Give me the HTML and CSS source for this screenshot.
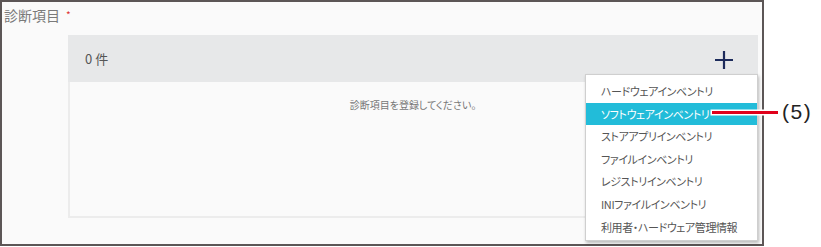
FILE: index.html
```html
<!DOCTYPE html>
<html lang="ja">
<head>
<meta charset="utf-8">
<link rel="stylesheet" href="styles.css">
</head>
<body>
<div class="frame">
  <div class="label">診断項目<span class="req">*</span></div>
  <div class="panel">
    <div class="panel-head">
      <span class="count">0 件</span>
      <svg class="plus" width="20" height="20" viewBox="0 0 20 20"><path d="M10 1V19M1 10H19" stroke="#1d2b5b" stroke-width="2.2" fill="none"/></svg>
    </div>
    <div class="panel-body">診断項目を登録してください。</div>
  </div>
  <ul class="menu">
    <li>ハードウェアインベントリ</li>
    <li class="active">ソフトウェアインベントリ</li>
    <li>ストアアプリインベントリ</li>
    <li>ファイルインベントリ</li>
    <li>レジストリインベントリ</li>
    <li>INIファイルインベントリ</li>
    <li>利用者・ハードウェア管理情報</li>
  </ul>
</div>
<div class="callout"><span class="line"></span><span class="num">(5)</span></div>
</body>
</html>
```

FILE: styles.css
```css
html, body { margin: 0; padding: 0; background: #ffffff; }
body {
  position: relative;
  width: 821px;
  height: 247px;
  overflow: hidden;
  font-family: "Noto Sans CJK JP", "Noto Sans", sans-serif;
}
.frame {
  position: relative;
  box-sizing: border-box;
  width: 764px;
  height: 246px;
  border: 2px solid #5c5656;
  background: #fafafa;
  padding: 3px 0 0 2px;
}
.label {
  font-size: 14px;
  line-height: 20px;
  color: #7a7a7a;
}
.req {
  color: #d33;
  font-size: 10px;
  vertical-align: top;
  margin-left: 6px;
}
.panel {
  margin: 10px 0 0 64px;
  width: 690px;
}
.panel-head {
  height: 47px;
  background: #e7e8e9;
  display: flex;
  align-items: center;
  justify-content: space-between;
  padding: 0 24px 0 17px;
}
.count {
  font-size: 13px;
  color: #555;
}
.plus { margin-top: 2px; }
.panel-body {
  box-sizing: border-box;
  height: 136px;
  border: 2px solid #ececec;
  border-top: none;
  text-align: center;
  font-size: 10px;
  color: #777;
  padding-top: 15px;
  font-feature-settings: "palt";
}
.menu {
  position: absolute;
  left: 583px;
  top: 72px;
  width: 173px;
  height: 167px;
  box-sizing: border-box;
  margin: 0;
  padding: 5px 0 0 0;
  list-style: none;
  background: #fff;
  border: 1px solid #cfcfcf;
  box-shadow: 1px 2px 3px rgba(0,0,0,0.25);
}
.menu li {
  height: 22.6px;
  line-height: 22.6px;
  padding-left: 15px;
  font-size: 11px;
  letter-spacing: -0.4px;
  color: #555;
  font-feature-settings: "palt";
  white-space: nowrap;
}
.menu li.active {
  background: #22bcd9;
  color: #fff;
}
.callout {
  position: absolute;
  left: 712px;
  top: 100px;
  display: flex;
  align-items: center;
  height: 24px;
}
.line {
  width: 66px;
  height: 3px;
  background: #e0001b;
  box-shadow: 0 0 0 1.5px #fff;
}
.num {
  margin-left: 4px;
  font-family: "Liberation Sans", Arial, sans-serif;
  font-size: 21px;
  letter-spacing: 1.5px;
  color: #222;
}
```
